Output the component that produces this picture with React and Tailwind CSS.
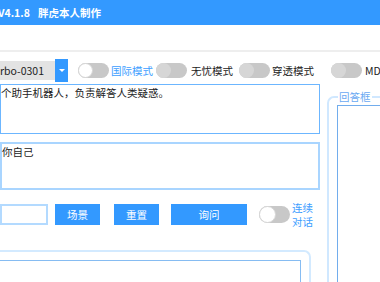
const Toggle = ({ on = true }) => (
  <div className="relative h-[15px] w-[31px] shrink-0 rounded-full bg-[#c8c8c8]">
    <div
      className={`absolute left-0 top-0 h-[15px] w-[15px] rounded-full ${
        on ? "border border-[#d6d6d6] bg-white" : "bg-[#d6d6d6]"
      }`}
    />
  </div>
);

const App = () => {
  return (
    <div className="h-[282px] w-[380px] overflow-hidden bg-white font-['Noto_Sans_CJK_SC',sans-serif] text-[10.5px] leading-[14px] text-[#222]">
      {/* title bar */}
      <div className="flex h-[25px] items-center bg-[#3399ff] text-[10.5px] font-semibold text-white">
        <span className="-ml-[2px]">V4.1.8</span>
        <span className="ml-[8px]">胖虎本人制作</span>
      </div>
      <div className="h-[25px]" />
      <div className="h-[2px] bg-[#eeeeee]" />

      {/* toolbar */}
      <div className="mt-[7px] flex h-[23px] items-center whitespace-nowrap">
        <div className="flex h-[23px] items-center">
          <div className="flex h-[19px] w-[55px] items-center bg-[#e3e3e3]">
            rbo-0301
          </div>
          <div className="flex h-[23px] w-[13px] items-center justify-center bg-[#3399ff]">
            <div className="h-0 w-0 border-x-[3px] border-t-[3px] border-x-transparent border-t-white" />
          </div>
        </div>
        <div className="ml-[10px]">
          <Toggle />
        </div>
        <span className="ml-[2px] text-[#3d9eff]">国际模式</span>
        <div className="ml-[3px]">
          <Toggle on={false} />
        </div>
        <span className="ml-[4px]">无忧模式</span>
        <div className="ml-[6px]">
          <Toggle on={false} />
        </div>
        <span className="ml-[2px]">穿透模式</span>
        <div className="ml-[17px]">
          <Toggle on={false} />
        </div>
        <span className="ml-[3px]">MD模式</span>
      </div>

      <div className="mt-[2px] flex">
        {/* left column */}
        <div className="flex w-[320px] shrink-0 flex-col">
          <div className="h-[50px] border border-[#6cb6ff] pt-[1px]">
            个助手机器人，负责解答人类疑惑。
          </div>
          <div className="mt-[8px] h-[48px] border-2 border-[#a9d5ff] pt-[1px]">
            你自己
          </div>

          <div className="mt-[14px] flex h-[21px] items-center whitespace-nowrap">
            <div className="h-[21px] w-[48px] border-2 border-[#b3daff] bg-white" />
            <button className="ml-[7px] h-[21px] w-[45px] bg-[#3399ff] text-white">
              场景
            </button>
            <button className="ml-[14px] h-[21px] w-[45px] bg-[#3399ff] text-white">
              重置
            </button>
            <button className="ml-[12px] h-[21px] w-[76px] bg-[#3399ff] text-white">
              询问
            </button>
            <div className="ml-[12px]">
              <div className="relative h-[17px] w-[31px] rounded-full bg-[#c8c8c8]">
                <div className="absolute left-0 top-0 h-[17px] w-[17px] rounded-full border border-[#d6d6d6] bg-white" />
              </div>
            </div>
            <div className="ml-[2px] flex flex-col text-[#3d9eff]">
              <span>连续</span>
              <span>对话</span>
            </div>
          </div>

          <div className="mt-[25px] h-[60px] w-[311px] rounded-tr-[7px] border-r-2 border-t-2 border-[#d3eaff] pr-[8px] pt-[8px]">
            <div className="h-full border-r border-t border-[#86bcf2]" />
          </div>
        </div>

        {/* right column */}
        <fieldset className="ml-[7px] mt-[6px] h-[200px] w-[80px] shrink-0 rounded-tl-[7px] border-l-2 border-t-2 border-[#d0e8ff] pl-[8px] pt-[1px]">
          <legend className="ml-[1px] px-[1px] text-[#6aa9f2]">回答框</legend>
          <div className="h-full border-l border-t border-[#72aded]" />
        </fieldset>
      </div>
    </div>
  );
};

export default App;
